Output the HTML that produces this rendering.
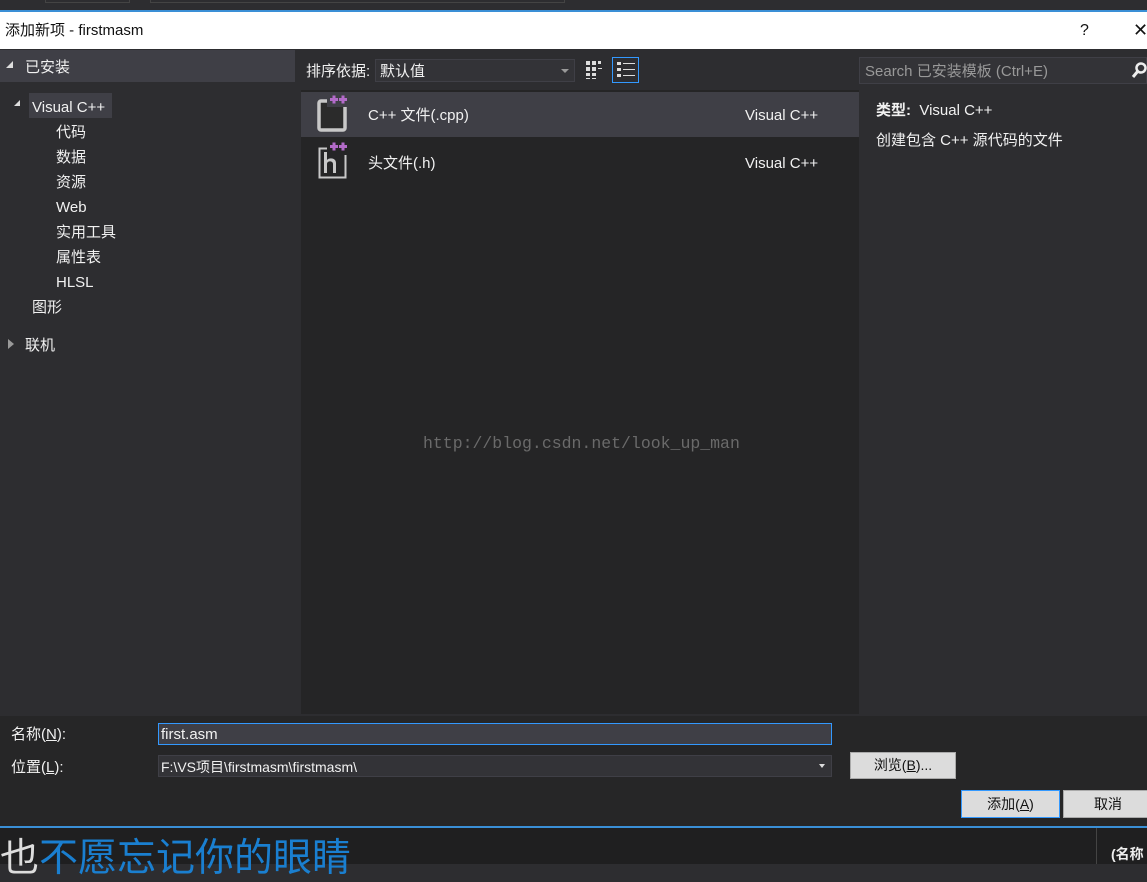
<!DOCTYPE html>
<html><head><meta charset="utf-8"><style>
*{margin:0;padding:0;box-sizing:border-box}
body{width:1147px;height:864px;overflow:hidden;background:#2d2d30;font-family:"Liberation Sans","Noto Sans CJK SC",sans-serif;font-size:15px;color:#f1f1f1;position:relative}
.a{position:absolute;white-space:nowrap;line-height:20px}
.t{margin-top:2px}
</style></head><body>
<div class="a" style="left:0;top:0;width:1147px;height:11px;background:#2d2d30"></div>
<div class="a" style="left:45px;top:0;width:85px;height:3px;border:1px solid #444;border-top:none"></div>
<div class="a" style="left:150px;top:0;width:415px;height:3px;border:1px solid #444;border-top:none"></div>
<div class="a" style="left:0;top:10px;width:1147px;height:2px;background:#3a8fd6"></div>
<div class="a" style="left:0;top:12px;width:1147px;height:37px;background:#fff"></div>
<div class="a" style="left:5px;top:21px;color:#111;font-size:15px">添加新项 - firstmasm</div>
<div class="a" style="left:1080px;top:21px;color:#111;font-size:16px">?</div>
<div class="a" style="left:1133px;top:20px;color:#111;font-size:18px">✕</div>

<div class="a" style="left:0;top:50px;width:295px;height:32px;background:#3f3f46"></div>
<div class="a" style="left:6px;top:61px;width:0;height:0;border-left:7px solid transparent;border-bottom:7px solid #ddd"></div>
<div class="a" style="left:25px;top:58px">已安装</div>
<div class="a" style="left:14px;top:100px;width:0;height:0;border-left:6px solid transparent;border-bottom:6px solid #ddd"></div>
<div class="a" style="left:29px;top:93px;width:83px;height:25px;background:#3f3f46"></div>
<div class="a" style="left:32px;top:98px">Visual C++</div>
<div class="a" style="left:56px;top:123px">代码</div>
<div class="a" style="left:56px;top:148px">数据</div>
<div class="a" style="left:56px;top:173px">资源</div>
<div class="a" style="left:56px;top:198px">Web</div>
<div class="a" style="left:56px;top:223px">实用工具</div>
<div class="a" style="left:56px;top:248px">属性表</div>
<div class="a" style="left:56px;top:273px">HLSL</div>
<div class="a" style="left:32px;top:298px">图形</div>
<div class="a" style="left:8px;top:339px;width:0;height:0;border-top:5px solid transparent;border-bottom:5px solid transparent;border-left:6px solid #999"></div>
<div class="a" style="left:25px;top:336px">联机</div>

<div class="a" style="left:306px;top:62px">排序依据:</div>
<div class="a" style="left:375px;top:59px;width:200px;height:23px;border:1px solid #3f3f46;background:#333337"></div>
<div class="a" style="left:380px;top:62px">默认值</div>
<div class="a" style="left:561px;top:69px;width:0;height:0;border-left:4px solid transparent;border-right:4px solid transparent;border-top:4px solid #999"></div>
<svg class="a" style="left:585px;top:59px" width="20" height="22"><g fill="#ddd"><rect x="1" y="2" width="4" height="4"/><rect x="7" y="2" width="4" height="4"/><rect x="13" y="2" width="3" height="3"/><rect x="1" y="8" width="4" height="4"/><rect x="7" y="8" width="4" height="4"/><rect x="13" y="9" width="4" height="1"/><rect x="1" y="14" width="4" height="3"/><rect x="7" y="14" width="4" height="3"/><rect x="1" y="19" width="4" height="1"/><rect x="7" y="19" width="4" height="1"/></g></svg>
<div class="a" style="left:612px;top:57px;width:27px;height:26px;border:1px solid #3399ff"></div>
<svg class="a" style="left:615px;top:60px" width="22" height="20"><g fill="#ddd"><rect x="2" y="2" width="4" height="3"/><rect x="8" y="3" width="12" height="1"/><rect x="2" y="8" width="4" height="3"/><rect x="8" y="9" width="12" height="1"/><rect x="2" y="14" width="4" height="3"/><rect x="8" y="15" width="12" height="1"/></g></svg>

<div class="a" style="left:301px;top:90px;width:558px;height:624px;background:#252526"></div>
<div class="a" style="left:301px;top:92px;width:558px;height:45px;background:#3f3f46"></div>
<svg class="a" style="left:315px;top:94px" width="38" height="40"><rect x="4" y="7" width="26" height="29" rx="2" fill="#2b2b2b" stroke="#c8c8c8" stroke-width="3.5"/><rect x="12" y="0" width="22" height="13" fill="#3f3f46"/><g fill="#b36bc9"><rect x="15" y="4" width="8" height="3"/><rect x="17.5" y="1.5" width="3" height="8"/><rect x="24" y="4" width="8" height="3"/><rect x="26.5" y="1.5" width="3" height="8"/></g></svg>
<div class="a" style="left:368px;top:106px">C++ 文件(.cpp)</div>
<div class="a" style="left:745px;top:106px">Visual C++</div>
<svg class="a" style="left:315px;top:141px" width="38" height="40"><rect x="4.5" y="7.5" width="26" height="29" fill="none" stroke="#c8c8c8" stroke-width="2"/><rect x="12" y="0" width="22" height="14" fill="#252526"/><path d="M9 11h3v8c2-2.5 9-2.5 9 3v10h-3V23c0-3.5-6-3.5-6 0v9H9z" fill="#c8c8c8"/><g fill="#b36bc9"><rect x="15" y="4" width="8" height="3"/><rect x="17.5" y="1.5" width="3" height="8"/><rect x="24" y="4" width="8" height="3"/><rect x="26.5" y="1.5" width="3" height="8"/></g></svg>
<div class="a" style="left:368px;top:154px">头文件(.h)</div>
<div class="a" style="left:745px;top:154px">Visual C++</div>
<div class="a" style="left:423px;top:434px;font-family:'Liberation Mono',monospace;font-size:16.5px;color:#6a6a6a">http://blog.csdn.net/look_up_man</div>

<div class="a" style="left:859px;top:57px;width:288px;height:27px;border:1px solid #3f3f46;background:#333337"></div>
<div class="a" style="left:865px;top:62px;color:#999">Search 已安装模板 (Ctrl+E)</div>
<svg class="a" style="left:1131px;top:62px" width="16" height="17"><circle cx="10" cy="6" r="4.5" stroke="#eee" stroke-width="2.5" fill="none"/><path d="M7 9L2 15" stroke="#eee" stroke-width="3"/></svg>
<div class="a" style="left:876px;top:101px"><b>类型:</b>&nbsp; Visual C++</div>
<div class="a" style="left:876px;top:131px">创建包含 C++ 源代码的文件</div>

<div class="a" style="left:0;top:716px;width:1147px;height:110px;background:#262627"></div>
<div class="a" style="left:11px;top:725px">名称(<u>N</u>):</div>
<div class="a" style="left:158px;top:723px;width:674px;height:22px;background:#3f3f46;border:1px solid #3399ff"></div>
<div class="a" style="left:161px;top:725px">first.asm</div>
<div class="a" style="left:11px;top:758px">位置(<u>L</u>):</div>
<div class="a" style="left:158px;top:755px;width:674px;height:22px;background:#333337;border:1px solid #3f3f46"></div>
<div class="a" style="left:161px;top:757px;font-size:14px">F:\VS项目\firstmasm\firstmasm\</div>
<div class="a" style="left:819px;top:764px;width:0;height:0;border-left:3px solid transparent;border-right:3px solid transparent;border-top:4px solid #ddd"></div>
<div class="a" style="left:850px;top:752px;width:106px;height:27px;background:#dcdcdc;border:1px solid #aaa;color:#111;text-align:center;line-height:25px;font-size:14px">浏览(<u>B</u>)...</div>
<div class="a" style="left:961px;top:790px;width:99px;height:28px;background:#dcdcdc;border:1px solid #3399ff;color:#111;text-align:center;line-height:26px;font-size:14px">添加(<u>A</u>)</div>
<div class="a" style="left:1063px;top:790px;width:90px;height:28px;background:#dcdcdc;border:1px solid #aaa;color:#111;text-align:center;line-height:26px;font-size:14px">取消</div>
<div class="a" style="left:0;top:826px;width:1147px;height:2px;background:#3a8fd6"></div>
<div class="a" style="left:0;top:828px;width:1147px;height:36px;background:#1f1f20"></div>
<div class="a" style="left:0;top:836px;font-size:39px;color:#ddd;line-height:46px">也<span style="color:#1a7fd0">不愿忘记你的眼睛</span></div>
<div class="a" style="left:1096px;top:828px;width:1px;height:36px;background:#444"></div>
<div class="a" style="left:1111px;top:844px;font-size:14px;font-weight:bold;color:#eee">(名称</div>
</body></html>
